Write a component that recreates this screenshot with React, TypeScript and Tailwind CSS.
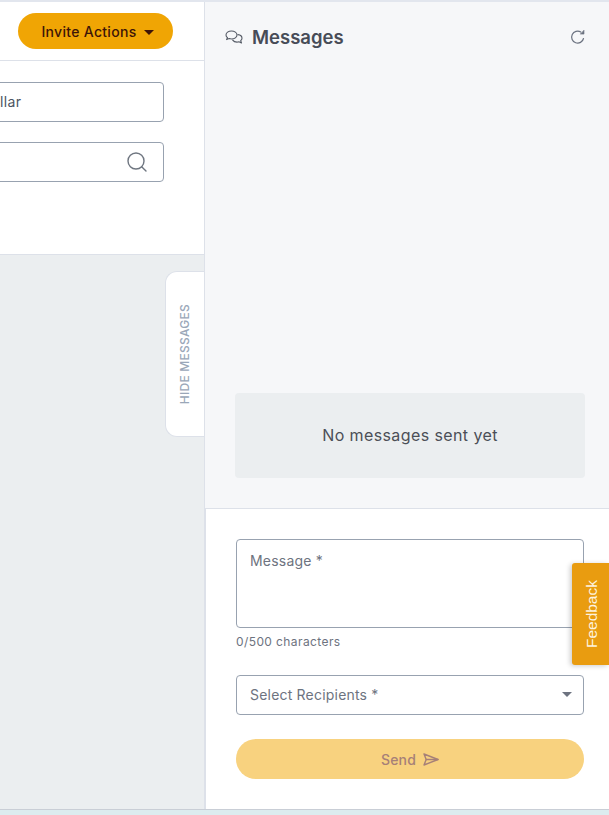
import { Search } from "lucide-react";

const font = { fontFamily: '"Inter", "Noto Sans", sans-serif' };

function Chats() {
  return (
    <svg width="18" height="15" viewBox="0 0 18 15" fill="none" stroke="#555b66" strokeWidth="1.1" strokeLinejoin="round" strokeLinecap="round">
      <path d="M6.500 1C3.400 1 1 2.800 1 5c0 1.100.6 2 1.500 2.700L1.600 9.600l2.600-1c.7.3 1.500.4 2.300.4 3 0 5.500-1.800 5.500-4S9.500 1 6.500 1z" />
      <path d="M12.900 4.600c2.300.3 4.100 1.800 4.100 3.600 0 1-.5 1.800-1.300 2.500l.8 2.200-2.600-1.100c-.6.200-1.200.3-1.900.3-1.900 0-3.500-.8-4.300-2" />
    </svg>
  );
}

function Refresh() {
  return (
    <svg width="16" height="16" viewBox="0 0 16 16" fill="none" stroke="#6b7280" strokeWidth="1.2" strokeLinecap="round">
      <path d="M13.500 9.500A6 6 0 1 1 10.800 3" />
      <path d="M14 1.500v3.600H10.600z" fill="#6b7280" strokeWidth="0.6" strokeLinejoin="round" />
    </svg>
  );
}

function Plane() {
  return (
    <svg width="16" height="13" viewBox="0 0 16 13" fill="none" stroke="#a68078" strokeWidth="1.400" strokeLinejoin="round" strokeLinecap="round">
      <path d="M1 1l14 5.500L1 12l2.200-5.500z" />
      <path d="M3.200 6.500H15" />
    </svg>
  );
}

export default function App() {
  return (
    <div style={font} className="relative flex h-[815px] w-[609px] flex-col overflow-hidden bg-[#dcecef]">
      <div className="flex h-[810px] border-b border-t-2 border-b-[#c9ced6] border-t-[#e2e6ee]">
        <div className="flex w-[205px] shrink-0 flex-col overflow-hidden border-r border-[#dde1e9] bg-[#ebeef0]">
          <div className="flex h-[59px] shrink-0 items-center justify-end border-b border-[#dde1e9] bg-white pr-[31px]">
            <button className="flex h-[36px] w-[155px] items-center justify-center gap-[8px] rounded-full bg-[#f0a504] pl-[5px] text-[14px] font-medium tracking-[0.3px] text-[#3d1408]">
              <span>Invite Actions</span>
              <span className="mt-[2px] h-0 w-0 border-x-[5px] border-t-[5px] border-x-transparent border-t-[#3d1408]" />
            </button>
          </div>
          <div className="flex h-[194px] shrink-0 flex-col gap-[20px] border-b border-[#dde1e9] bg-white pt-[21px]">
            <div className="ml-[-34px] flex h-[40px] w-[198px] items-center rounded-[4px] border border-[#98a2b0] pb-[2px] pl-[14px] text-[14px] tracking-[0.3px] text-[#4b5563]">
              Dollar
            </div>
            <div className="ml-[-34px] flex h-[40px] w-[198px] items-center justify-end rounded-[4px] border border-[#98a2b0] pr-[14px]">
              <Search size={24} strokeWidth={1.4} className="text-[#6f7680]" />
            </div>
          </div>
        </div>
        <div className="flex min-w-0 flex-1 flex-col">
          <div className="flex h-[507px] shrink-0 flex-col border-b border-[#dde1e9] bg-[#f6f7f9] pl-[30px] pr-[24px]">
            <div className="mt-[24px] flex h-[22px] items-center">
              <div className="ml-[-10px]"><Chats /></div>
              <span className="ml-[9px] pt-[1px] text-[18.500px] font-semibold text-[#474c57]">Messages</span>
              <div className="ml-auto mr-[-1px]"><Refresh /></div>
            </div>
            <div className="mt-[345px] flex h-[85px] items-center justify-center rounded-[4px] bg-[#ebeef0] pb-[2px] text-[16px] tracking-[0.4px] text-[#4b4f57]">
              No messages sent yet
            </div>
          </div>
          <div className="flex flex-1 flex-col border-l border-[#dde1e9] bg-white pl-[30px] pr-[25px] pt-[30px]">
            <div className="flex h-[89px] items-start rounded-[4px] border border-[#98a2b0] px-[13px] pt-[10px] text-[14px] tracking-[0.2px] text-[#6d7380]">
              Message *
            </div>
            <div className="mt-[5px] text-[12px] tracking-[0.4px] text-[#6d7380]">0/500 characters</div>
            <div className="mt-[24px] flex h-[40px] items-center justify-between rounded-[4px] border border-[#98a2b0] pb-[1px] pl-[13px] pr-[11px] text-[14px] tracking-[0.2px] text-[#6d7380]">
              <span>Select Recipients *</span>
              <span className="h-0 w-0 border-x-[5px] border-t-[5px] border-x-transparent border-t-[#6d7380]" />
            </div>
            <button className="mt-[24px] flex h-[40px] items-center justify-center gap-[7px] rounded-full bg-[#f8d27f] text-[14px] font-medium tracking-[0.2px] text-[#a68078]">
              <span>Send</span>
              <Plane />
            </button>
          </div>
        </div>
      </div>

      <div className="absolute left-[165px] top-[271px] flex h-[166px] w-[39px] items-center justify-center rounded-l-[12px] border border-r-0 border-[#dde1e9] bg-white">
        <span className="rotate-180 text-[12px] font-medium tracking-[0.25px] text-[#9aa7b8] [writing-mode:vertical-rl]">HIDE MESSAGES</span>
      </div>
      <div className="absolute left-[572px] top-[563px] flex h-[102px] w-[37px] items-center justify-center rounded-l-[3px] bg-[#e99c10] pl-[3px] shadow-[-2px_1px_5px_rgba(0,0,0,0.2)]">
        <span style={{ fontFamily: '"Liberation Sans", sans-serif' }} className="rotate-180 text-[15.500px] text-[#fdf3df] [writing-mode:vertical-rl]">Feedback</span>
      </div>
    </div>
  );
}
